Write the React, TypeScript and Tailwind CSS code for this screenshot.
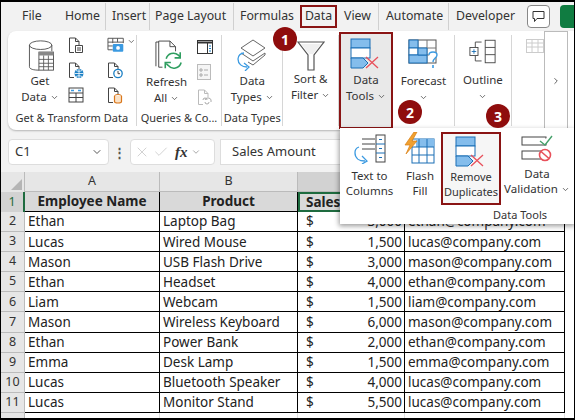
import { ChevronDown, ChevronRight, Check, X } from 'lucide-react'

const RED = 'border-[#8a1414]'

const rows = [
  ['Ethan', 'Laptop Bag', '3,000', 'ethan@company.com'],
  ['Lucas', 'Wired Mouse', '1,500', 'lucas@company.com'],
  ['Mason', 'USB Flash Drive', '3,000', 'mason@company.com'],
  ['Ethan', 'Headset', '4,000', 'ethan@company.com'],
  ['Liam', 'Webcam', '1,500', 'liam@company.com'],
  ['Mason', 'Wireless Keyboard', '6,000', 'mason@company.com'],
  ['Ethan', 'Power Bank', '2,000', 'ethan@company.com'],
  ['Emma', 'Desk Lamp', '1,500', 'emma@company.com'],
  ['Lucas', 'Bluetooth Speaker', '4,000', 'lucas@company.com'],
  ['Lucas', 'Monitor Stand', '5,500', 'lucas@company.com'],
]

const tabs = [
  { label: 'File', cls: 'ml-[21px] w-[43px]' },
  { label: 'Home', cls: 'w-[41px] border-r border-[#d0d0d0] h-[27px] mr-[6px]' },
  { label: 'Insert', cls: 'w-[38px] border-r border-[#d0d0d0] h-[27px] mr-[5px]' },
  { label: 'Page Layout', cls: 'w-[79px] border-r border-[#d0d0d0] h-[27px] mr-[6px]' },
  { label: 'Formulas', cls: 'w-[55px]' },
]

function Chev({ className = '' }: { className?: string }) {
  return <ChevronDown size={9} strokeWidth={2} className={`inline-block text-[#444] ${className}`} />
}

function Badge({ n, cls }: { n: number; cls: string }) {
  return (
    <div className={`absolute w-[24px] h-[24px] rounded-full bg-[#8f0d0d] text-white text-[14px] font-bold flex items-center justify-center z-30 ${cls}`}>
      {n}
    </div>
  )
}

function GroupLabel({ children }: { children: string }) {
  return <div className="h-[17px] text-center text-[11px] leading-[17px] text-[#333] whitespace-nowrap">{children}</div>
}

function BigLabel({ a, b, chev = true }: { a: string; b?: string; chev?: boolean }) {
  return (
    <div className="text-center text-[11.5px] leading-[16px] text-[#333] whitespace-nowrap">
      <div>{a}</div>
      <div>
        {b} {chev && <Chev />}
      </div>
    </div>
  )
}

function DocIcon({ color, kind }: { color: string; kind: string }) {
  return (
    <svg width="16" height="17" viewBox="0 0 16 17" fill="none">
      <path d="M1.500 15.500V1h6l3.500 3.500V8M1.500 15.500H6M7.500 1v3.500H11" stroke="#444" />
      {kind === 'list' && <path d="M7.500 8.500h7v7h-7zM9 11h4M9 13h4" stroke={color} />}
      {kind === 'globe' && <g><circle cx="11" cy="11.500" r="4.500" fill={color} /><path d="M6.500 11.500h9M11 7v9M8 8.500c2 1 4 1 6 0M8 14.500c2-1 4-1 6 0" stroke="#fff" strokeWidth="0.8" /></g>}
      {kind === 'clock' && <g><circle cx="11" cy="11.500" r="4.200" fill="#fff" stroke={color} strokeWidth="1.300" /><path d="M11 9v2.700h2" stroke="#444" /></g>}
      {kind === 'db' && <g><ellipse cx="11" cy="9" rx="3.500" ry="1.500" fill="#fff" stroke={color} /><path d="M7.500 9v5.500c0 2 7 2 7 0V9" fill="#fbe3c8" stroke={color} strokeWidth="1.200" /></g>}
    </svg>
  )
}

function GetDataIcon() {
  return (
    <svg width="27" height="31" viewBox="0 0 30 36" fill="none" className="ml-[3px]">
      <ellipse cx="14" cy="6" rx="13" ry="5" fill="#fff" stroke="#444" />
      <path d="M1 6v25c0 3 5 4 11 4" stroke="#444" />
      <path d="M27 6v7" stroke="#444" />
      <rect x="12" y="14" width="17" height="21" fill="#fff" stroke="#444" />
      <rect x="12" y="14" width="17" height="4" fill="#888" />
      <path d="M12 22.500h17M12 27h17M12 31h17M17.500 18v17M23 18v17" stroke="#555" />
    </svg>
  )
}

function RefreshIcon() {
  return (
    <svg width="28" height="32" viewBox="0 0 30 34" fill="none" className="ml-[4px]">
      <path d="M1 2v26M1 2h3" stroke="#444" />
      <path d="M4 29V1h12l6 6v5M16 1v6h6M4 29h4" stroke="#444" />
      <path d="M12 20a8 8 0 0 1 13-4l2 2M28 24a8 8 0 0 1-14 3l-2-2" stroke="#2f9e60" strokeWidth="1.700" />
      <path d="M27 13v6h-6M11 30v-6h6" stroke="#2f9e60" strokeWidth="1.700" />
    </svg>
  )
}

function DataTypesIcon() {
  return (
    <svg width="32" height="32" viewBox="0 0 32 32" fill="none">
      <path d="M17 1l12 8-12 8-12-8z" fill="#fff" stroke="#666" />
      <path d="M5 14l12 8 12-8 0 2-12 10-5-3" stroke="#666" />
      <path d="M8 14a6 6 0 0 0-6 6c0 5 4 8 9 8" stroke="#3b9ae1" strokeWidth="1.300" />
      <path d="M8 24l5 4-4 4" stroke="#3b9ae1" strokeWidth="1.300" />
    </svg>
  )
}

function Funnel() {
  return (
    <svg width="28" height="30" viewBox="0 0 28 30" fill="none">
      <path d="M1 1h26L17 14v15h-6V14z" fill="#fff" stroke="#555" strokeWidth="1.200" />
      <path d="M4 3h20l-8 10h-4z" fill="#f0f0f0" />
    </svg>
  )
}

function DuplicatesIcon() {
  return (
    <svg width="32" height="31" viewBox="0 0 32 31" fill="none">
      <rect x="1" y="1" width="19" height="9" fill="#84bdec" stroke="#1a6fb5" />
      <rect x="1" y="10" width="19" height="10" fill="#fff" stroke="#1a6fb5" />
      <path d="M1 20h12l5 5-5 5H1z" fill="#84bdec" stroke="#1a6fb5" />
      <path d="M16 19l12 11M28 19L16 30" stroke="#e8505b" strokeWidth="1.300" />
    </svg>
  )
}

function ForecastIcon() {
  return (
    <svg width="32" height="33" viewBox="0 0 32 33" fill="none" className="ml-[2px]">
      <rect x="1" y="1" width="27" height="23" fill="#fff" stroke="#555" />
      <path d="M10 1v23M19 1v23M1 9h27M1 16h27" stroke="#777" />
      <rect x="1" y="1" width="9" height="8" fill="#84bdec" stroke="#1a6fb5" />
      <rect x="1" y="9" width="9" height="7" fill="#fff" stroke="#1a6fb5" />
      <rect x="1" y="16" width="18" height="8" fill="#84bdec" stroke="#1a6fb5" />
      <path d="M10 9h9v7h-9z" fill="#84bdec" stroke="#1a6fb5" />
      <path d="M21 16c0-4 8-4 8 0 0 3-4 3-4 7" fill="#fff" stroke="#3b9ae1" strokeWidth="1.400" />
      <path d="M25 26v3" stroke="#3b9ae1" strokeWidth="1.600" />
    </svg>
  )
}

function OutlineIcon() {
  return (
    <svg width="27" height="27" viewBox="0 0 30 27" fill="none">
      <rect x="18" y="1" width="11" height="25" fill="#fff" stroke="#444" />
      <path d="M18 9h11M18 17h11" stroke="#444" />
      <path d="M14 3H7v6M7 18v6h7" stroke="#444" />
      <rect x="1" y="9" width="9" height="9" fill="#fff" stroke="#444" />
      <path d="M3 13.500h5M5.500 11v5" stroke="#1a6fb5" />
    </svg>
  )
}

function TextColumnsIcon() {
  return (
    <svg width="34" height="30" viewBox="0 0 34 30" fill="none">
      <path d="M9 5h13M9 10h13M9 15h13" stroke="#444" />
      <rect x="23" y="1" width="9" height="27" fill="#fff" stroke="#444" />
      <path d="M23 10h9M23 19h9M26 5.500h3M26 14.500h3M26 23.500h3" stroke="#1a6fb5" />
      <path d="M6 13a6 6 0 0 0-4 6c0 5 4 8 10 8" stroke="#3b9ae1" strokeWidth="1.300" />
      <path d="M9 22l5 5-5 3" stroke="#3b9ae1" strokeWidth="1.300" />
    </svg>
  )
}

function FlashFillIcon() {
  return (
    <svg width="32" height="33" viewBox="0 0 32 33" fill="none">
      <rect x="8" y="7" width="22" height="24" fill="#fff" stroke="#1a6fb5" />
      <path d="M12 7h18v8H12z" fill="#84bdec" />
      <path d="M8 15h22M8 23h22M15 7v24M23 7v24" stroke="#1a6fb5" />
      <path d="M10 0L1 13h5l-4 9 11-13H8l5-9z" fill="#f0a030" stroke="#d97f16" strokeWidth="0.700" />
    </svg>
  )
}

function ValidationIcon() {
  return (
    <svg width="32" height="28" viewBox="0 0 32 28" fill="none">
      <rect x="1" y="3" width="24" height="8" fill="#fff" stroke="#444" />
      <rect x="1" y="17" width="24" height="8" fill="#fff" stroke="#444" />
      <path d="M19 7l5 4 7-9" stroke="#45a06a" strokeWidth="1.400" fill="#fff" />
      <circle cx="24" cy="21" r="5.500" fill="#fff" stroke="#e8505b" strokeWidth="1.600" />
      <path d="M20 17.500l8 7" stroke="#e8505b" strokeWidth="1.600" />
    </svg>
  )
}

function App() {
  return (
    <div
      className="relative box-border w-[575px] h-[420px] overflow-hidden bg-[#f2f2f2] border-t-2 border-l border-r border-b-2 border-black text-[#222]"
      style={{ fontFamily: '"Noto Sans", "Open Sans", sans-serif' }}
    >
      {/* tab strip */}
      <div className="flex items-center h-[29px] text-[12.300px] text-[#333] whitespace-nowrap">
        {tabs.map((t) => (
          <div key={t.label} className={`flex items-center ${t.cls}`}>{t.label}</div>
        ))}
        <div className={`ml-[5px] w-[37px] h-[23px] border-2 ${RED} flex items-center justify-center font-normal`}>Data</div>
        <div className="w-[42px] pl-[7px] border-r border-[#d0d0d0] h-[27px] flex items-center">View</div>
        <div className="w-[70px] pl-[7px] border-r border-[#d0d0d0] h-[27px] flex items-center">Automate</div>
        <div className="w-[76px] pl-[7px] flex items-center">Developer</div>
        <div className="ml-[2px] w-[23px] h-[23px] rounded-[4px] border border-[#888] bg-white flex items-center justify-center">
          <svg width="13" height="13" viewBox="0 0 13 13" fill="none">
            <path d="M1 1.500h11v7H5l-2.500 3v-3H1z" stroke="#333" />
          </svg>
        </div>
        <div className="ml-[10px] flex-1 h-[23px] rounded-l-[4px] bg-[#107c41]" />
      </div>

      {/* ribbon */}
      <div className="ml-[7px] h-[99px] rounded-l-[8px] bg-white flex shadow-[0_1px_2px_rgba(0,0,0,0.25)]">
        <div className="w-[129px] border-r border-[#d6d6d6] flex flex-col my-[4px]">
          <div className="flex flex-1">
            <div className="w-[66px] flex flex-col items-center pt-[5px]">
              <GetDataIcon />
              <div className="mt-[2px]"><BigLabel a="Get" b="Data" /></div>
            </div>
            <div className="-ml-[4px] grid grid-cols-2 gap-x-[10px] gap-y-[8px] pt-[2px] content-start">
              <DocIcon color="#444" kind="list" />
              <div className="flex items-start gap-[3px]">
                <svg width="18" height="16" viewBox="0 0 18 16" fill="none">
                  <path d="M1 1h16v5M1 1v12h5M1 5h16M1 9h5M6 1v5M11 1v4" stroke="#555" />
                  <rect x="6" y="7" width="11" height="8" rx="1" fill="#3b9ae1" />
                  <circle cx="11.500" cy="11" r="2" fill="#fff" />
                </svg>
                <Chev />
              </div>
              <DocIcon color="#1a7fc4" kind="globe" />
              <DocIcon color="#1a7fc4" kind="clock" />
              <svg width="16" height="16" viewBox="0 0 16 16" fill="none">
                <rect x="1" y="1" width="14" height="14" fill="#fff" stroke="#444" />
                <path d="M1 6h14M1 10.500h14M8 6v9" stroke="#444" />
                <path d="M3 3.500h3M10 3.500h3" stroke="#3b9ae1" strokeWidth="1.500" />
              </svg>
              <DocIcon color="#d9761a" kind="db" />
            </div>
          </div>
          <GroupLabel>Get & Transform Data</GroupLabel>
        </div>

        <div className="w-[86px] border-r border-[#d6d6d6] flex flex-col my-[4px]">
          <div className="flex flex-1">
            <div className="w-[60px] flex flex-col items-center pt-[5px]">
              <RefreshIcon />
              <div className="mt-[2px]"><BigLabel a="Refresh" b="All" /></div>
            </div>
            <div className="flex flex-col gap-[9px] pt-[5px]">
              <svg width="16" height="15" viewBox="0 0 16 15" fill="none">
                <rect x="0.500" y="0.500" width="15" height="13" fill="#fff" stroke="#333" />
                <path d="M0.500 2.500h15" stroke="#333" strokeWidth="2" />
                <path d="M10.500 3v11" stroke="#333" />
                <path d="M12 6h2M12 8.500h2M12 11h2" stroke="#1a7fc4" />
              </svg>
              <svg width="14" height="16" viewBox="0 0 14 16" fill="none">
                <rect x="0.500" y="0.500" width="13" height="15" fill="#f5f5f5" stroke="#bbb" />
                <path d="M3 5h2v2H3zM3 10h2v2H3zM7 6h4M7 11h4" stroke="#aaa" />
              </svg>
              <svg width="16" height="17" viewBox="0 0 16 17" fill="none">
                <path d="M1.500 15.500V1h6l3.500 3.500V8M1.500 15.500H6M7.500 1v3.500H11" stroke="#bbb" />
                <path d="M6 11a2 2 0 0 1 4 0M8 13a2 2 0 0 0 4 0 M8 11a2 2 0 0 1 6 2" stroke="#aaa" />
              </svg>
            </div>
          </div>
          <GroupLabel>Queries & Co...</GroupLabel>
        </div>

        <div className="w-[61px] border-r border-[#d6d6d6] flex flex-col my-[4px]">
          <div className="flex flex-col flex-1 items-center pt-[4px]">
            <DataTypesIcon />
            <div className="mt-[2px]"><BigLabel a="Data" b="Types" /></div>
          </div>
          <GroupLabel>Data Types</GroupLabel>
        </div>

        <div className="w-[56px] flex flex-col items-center pt-[6px] border-r border-[#d6d6d6] my-[4px]">
          <Funnel />
          <BigLabel a="Sort &" b="Filter" />
        </div>

        <div className={`w-[54px] h-[97px] mt-[1px] border-2 ${RED} bg-[#e9e9e9] flex flex-col items-center pt-[4px] shrink-0`}>
          <DuplicatesIcon />
          <div className="mt-[3px]"><BigLabel a="Data" b="Tools" /></div>
        </div>

        <div className="w-[62px] border-r border-[#d6d6d6] my-[4px] flex flex-col items-center pt-[4px] shrink-0">
          <ForecastIcon />
          <div className="mt-[1px]"><BigLabel a="Forecast" /></div>
        </div>

        <div className="w-[57px] my-[4px] border-r border-[#d6d6d6] flex flex-col items-center pt-[3px] shrink-0">
          <OutlineIcon />
          <div className="mt-[7px]"><BigLabel a="Outline" /></div>
        </div>

        <div className="flex-1 pl-[14px] pt-[8px]">
          <svg width="18" height="16" viewBox="0 0 18 16" fill="none">
            <rect x="0.500" y="0.500" width="17" height="13" fill="#fff" stroke="#ccc" />
            <path d="M0.500 4h17M0.500 8h17M6 0v14M12 0v14" stroke="#ccc" />
          </svg>
        </div>
        <div className="w-[24px] mr-[6px] shrink-0 border border-[#bbb] bg-white flex items-center justify-center">
          <ChevronRight size={10} className="text-[#444]" />
        </div>
      </div>

      {/* formula bar */}
      <div className="flex items-center mt-[9px] ml-[7px] h-[26px] text-[13px] text-[#333]">
        <div className="w-[101px] h-full rounded-[4px] bg-white border border-[#ddd] flex items-center justify-between pl-[6px] pr-[5px]">
          <span>C1</span>
          <ChevronDown size={12} className="text-[#555]" />
        </div>
        <div className="w-[21px] text-center font-bold text-[#555] leading-none">⋮</div>
        <div className="w-[85px] h-full rounded-[4px] bg-white border border-[#ddd] flex items-center gap-[3px] px-[3px]">
          <X size={16} strokeWidth={1} className="text-[#bbb]" />
          <Check size={16} strokeWidth={1} className="text-[#bbb]" />
          <span className="ml-[3px] italic font-bold text-[15px] leading-none" style={{ fontFamily: '"Liberation Serif", serif' }}>fx</span>
          <ChevronDown size={10} className="text-[#999]" />
        </div>
        <div className="flex-1 ml-[5px] h-full bg-white border border-[#ddd] flex items-center pl-[11px]">Sales Amount</div>
      </div>

      {/* sheet */}
      <div className="mt-[7px] grid grid-cols-[24px_135px_138px_107px_160px_1fr] grid-rows-[20px_20px_repeat(10,20.1px)_1fr] h-[246px] text-[13.500px] bg-white">
        <div className="bg-[#e6e6e6] border-r border-[#bbb] flex items-end justify-end p-[2px]">
          <div className="w-0 h-0 border-l-[11px] border-l-transparent border-b-[11px] border-b-[#b5b5b5]" />
        </div>
        <div className="bg-[#e6e6e6] border-r border-b border-[#bbb] flex items-center justify-center text-[12.500px] text-[#333]">A</div>
        <div className="bg-[#e6e6e6] border-r border-b border-[#bbb] flex items-center justify-center text-[12.500px] text-[#333]">B</div>
        <div className="bg-[#d2d2d2] border-r border-b border-[#bbb]" />
        <div className="bg-[#e6e6e6] border-r border-b border-[#bbb]" />
        <div className="bg-[#e6e6e6] border-b border-[#bbb]" />

        <div className="bg-[#d2d2d2] border-r-2 border-[#1e6b3f] flex items-center justify-center text-[12.500px] text-[#1e6b3f]">1</div>
        <div className="bg-[#d9d9d9] border-r border-b border-black flex items-center justify-center font-bold">Employee Name</div>
        <div className="bg-[#d9d9d9] border-r border-b border-black flex items-center justify-center font-bold">Product</div>
        <div className="bg-[#d9d9d9] border-2 border-[#1e6b3f] flex items-center pl-[6px] font-bold overflow-hidden whitespace-nowrap">Sales Amount</div>
        <div className="bg-[#d9d9d9] border-r border-b border-black" />
        <div className="bg-[#e6e6e6]" />

        {rows.flatMap((r, i) => [
          <div key={`n${i}`} className="bg-[#e6e6e6] border-r border-b border-[#bbb] flex items-center justify-center text-[12.500px] text-[#333]">{i + 2}</div>,
          <div key={`a${i}`} className="border-r border-b border-black pl-[3px] flex items-center">{r[0]}</div>,
          <div key={`b${i}`} className="border-r border-b border-black pl-[3px] flex items-center whitespace-nowrap">{r[1]}</div>,
          <div key={`c${i}`} className="border-r border-b border-black pl-[8px] pr-[2px] flex items-center justify-between"><span>$</span><span>{r[2]}</span></div>,
          <div key={`d${i}`} className="border-r border-b border-black pl-[3px] flex items-center whitespace-nowrap">{r[3]}</div>,
          <div key={`e${i}`} />,
        ])}

        <div className="bg-[#e6e6e6] border-r border-[#bbb]" />
        <div className="border-r border-[#e0e0e0]" />
        <div className="border-r border-[#e0e0e0]" />
        <div className="border-r border-[#e0e0e0]" />
        <div className="border-r border-[#e0e0e0]" />
        <div />
      </div>

      {/* Data Tools dropdown */}
      <div className="absolute left-[339px] top-[126px] w-[236px] h-[96px] bg-white shadow-[-1px_2px_5px_rgba(0,0,0,0.4)] z-20 flex flex-col">
        <div className="flex h-[78px] pt-[4px]">
          <div className="w-[59px] flex flex-col items-center pt-[2px]">
            <TextColumnsIcon />
            <div className="mt-[4px] text-center text-[11.500px] leading-[15px] text-[#333]">Text to<br />Columns</div>
          </div>
          <div className="w-[42px] flex flex-col items-center">
            <FlashFillIcon />
            <div className="mt-[3px] text-center text-[11.500px] leading-[15px] text-[#333]">Flash<br />Fill</div>
          </div>
          <div className={`w-[60px] h-[73px] border-2 ${RED} flex flex-col items-center pt-[2px] bg-[#f6f6f6]`}>
            <DuplicatesIcon />
            <div className="mt-[2px] text-center text-[11px] leading-[15px] text-[#333]">Remove<br />Duplicates</div>
          </div>
          <div className="w-[72px] flex flex-col items-center pt-[2px]">
            <ValidationIcon />
            <div className="mt-[4px] text-center text-[11.500px] leading-[15px] text-[#333] whitespace-nowrap">Data<br />Validation <Chev /></div>
          </div>
        </div>
        <div className="text-right pr-[29px] text-[11px] leading-[16px] text-[#333] mt-[1px]">Data Tools</div>
      </div>

      <Badge n={1} cls="left-[272px] top-[25px]" />
      <Badge n={2} cls="left-[397px] top-[98px]" />
      <Badge n={3} cls="left-[485px] top-[102px]" />
    </div>
  )
}

export default App
